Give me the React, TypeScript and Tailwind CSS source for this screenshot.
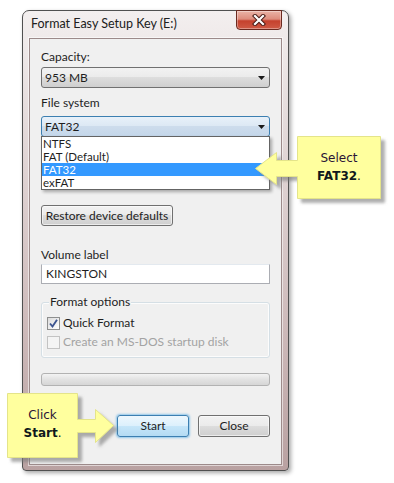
import React from "react";

const Arrow = () => (
  <svg width="7" height="4" viewBox="0 0 7 4" className="block">
    <path d="M0 0 L7 0 L3.5 4 Z" fill="#1a1a1a" />
  </svg>
);

export default function App() {
  return (
    <div className="relative w-[394px] h-[483px] bg-white overflow-hidden font-['Lato',sans-serif] text-[12px] text-[#1e1e1e]">
      {/* Window */}
      <div className="relative ml-[22px] mt-[10px] w-[267px] h-[461px] rounded-t-[7px] rounded-b-[4px] border border-[#505050] bg-[linear-gradient(180deg,#f3efef_0%,#e4dada_25%,#cdb9b9_70%,#b9a1a1_100%)] shadow-[2px_2px_4px_rgba(0,0,0,0.35)] flex flex-col">
        {/* Title bar */}
        <div className="h-[27px] flex items-center pl-[8px] shrink-0">
          <span className="leading-none text-[12.5px] text-[#202020]">Format Easy Setup Key (E:)</span>
        </div>
        <div className="absolute right-[6px] top-[-1px] w-[46px] h-[20px] rounded-b-[4px] border border-[#6b2a20] bg-[linear-gradient(180deg,#eab3a6_0%,#dd8c7c_45%,#c5412d_55%,#cf5a45_100%)] flex items-center justify-center shadow-[inset_0_0_0_1px_rgba(255,255,255,0.35)]">
          <svg width="14" height="12" viewBox="0 0 14 12">
            <path d="M3 2 L11 10 M11 2 L3 10" stroke="#4a1c16" strokeWidth="4.2" strokeLinecap="square" />
            <path d="M3 2 L11 10 M11 2 L3 10" stroke="#ffffff" strokeWidth="2.2" strokeLinecap="square" />
          </svg>
        </div>

        {/* Client area */}
        <div className="mx-[6px] mb-[5px] flex-1 border border-[#9c8a8a] shadow-[0_0_0_1px_rgba(255,255,255,0.55)] bg-[#f0f0f0] px-[11px] flex flex-col">
          <div className="mt-[10px] h-[16px] leading-[16px]">Capacity:</div>
          <div className="mt-[2px] h-[21px] rounded-[3px] border border-[#707070] bg-[linear-gradient(180deg,#f2f2f2_0%,#ebebeb_49%,#dddddd_50%,#cfcfcf_100%)] flex items-center pl-[3px] pr-[4px]">
            <span className="flex-1">953 MB</span>
            <Arrow />
          </div>
          <div className="mt-[7px] h-[16px] leading-[16px]">File system</div>
          <div className="relative mt-[5px] h-[21px]">
            <div className="h-full rounded-[3px] border border-[#3c7fb1] bg-[linear-gradient(180deg,#e8f1f9_0%,#dce8f4_49%,#cddcec_50%,#c4d7ea_100%)] flex items-center pl-[3px] pr-[4px]">
              <span className="flex-1">FAT32</span>
              <Arrow />
            </div>
            <div className="absolute left-0 top-[20px] w-full border border-[#646464] bg-white shadow-[2px_2px_3px_rgba(0,0,0,0.3)] z-10 text-[11.5px]">
              <div className="h-[13px] leading-[13px] pl-[1px] overflow-hidden">NTFS</div>
              <div className="h-[13px] leading-[13px] pl-[1px] overflow-hidden">FAT (Default)</div>
              <div className="h-[13px] leading-[13px] pl-[1px] overflow-hidden bg-[#3399ff] text-white">FAT32</div>
              <div className="h-[13px] leading-[13px] pl-[1px] overflow-hidden">exFAT</div>
            </div>
          </div>
          <div className="mt-[68px] w-[132px] h-[21px] rounded-[3px] border border-[#707070] bg-[linear-gradient(180deg,#f2f2f2_0%,#ebebeb_49%,#dddddd_50%,#cfcfcf_100%)] flex items-center justify-center whitespace-nowrap shadow-[inset_0_0_0_1px_rgba(255,255,255,0.6)]">
            Restore device defaults
          </div>
          <div className="mt-[21px] h-[16px] leading-[16px]">Volume label</div>
          <div className="mt-[1px] h-[20px] border border-[#abadb3] border-t-[#e3e9ef] bg-white flex items-center pl-[4px]">KINGSTON</div>

          <div className="relative mt-[18px] h-[56px] rounded-[3px] border border-[#d5dfe5] shadow-[inset_0_0_0_1px_rgba(255,255,255,0.8)] pl-[5px] pt-[12px] flex flex-col">
            <span className="absolute left-[7px] top-[-9px] px-[1px] bg-[#f0f0f0] leading-[16px]">Format options</span>
            <div className="h-[16px] flex items-center gap-[3px]">
              <div className="w-[13px] h-[13px] border border-[#8e8f8f] bg-[linear-gradient(135deg,#dcdcdc_0%,#ffffff_100%)] flex items-center justify-center">
                <svg width="11" height="11" viewBox="0 0 11 11">
                  <path d="M2 5.5 L4.5 8.5 L9 1.8" fill="none" stroke="#3d5590" strokeWidth="1.9" />
                </svg>
              </div>
              <span>Quick Format</span>
            </div>
            <div className="mt-[3px] h-[16px] flex items-center gap-[3px] text-[#a3a3a3]">
              <div className="w-[13px] h-[13px] border border-[#c3c3c3] bg-[#f4f4f4]" />
              <span>Create an MS-DOS startup disk</span>
            </div>
          </div>

          <div className="mt-[15px] h-[13px] rounded-[3px] border border-[#b2b2b2] bg-[linear-gradient(180deg,#f3f3f3_0%,#e2e2e2_50%,#d6d6d6_100%)]" />

          <div className="mt-[29px] flex justify-end gap-[9px]">
            <div className="w-[72px] h-[22px] rounded-[3px] border border-[#3c7fb1] bg-[linear-gradient(180deg,#eef7fd_0%,#dcf0fc_49%,#c6e6f9_50%,#b4dbf3_100%)] shadow-[0_0_2px_1px_rgba(80,170,230,0.6)] flex items-center justify-center">
              Start
            </div>
            <div className="w-[72px] h-[22px] rounded-[3px] border border-[#707070] bg-[linear-gradient(180deg,#f2f2f2_0%,#ebebeb_49%,#dddddd_50%,#cfcfcf_100%)] shadow-[inset_0_0_0_1px_rgba(255,255,255,0.6)] flex items-center justify-center">
              Close
            </div>
          </div>
        </div>
      </div>

      {/* Callout shapes */}
      <svg className="absolute left-0 top-0 pointer-events-none z-20" width="394" height="483" viewBox="0 0 394 483">
        <defs>
          <filter id="sh" x="-20%" y="-20%" width="150%" height="150%">
            <feDropShadow dx="4" dy="4" stdDeviation="1.6" floodColor="#7a7a7a" floodOpacity="0.6" />
          </filter>
        </defs>
        <path
          d="M297.5 136.5 L380.5 136.5 L380.5 198.5 L297.5 198.5 L297.5 176.5 L276.5 176.5 L276.5 184.5 L255.5 168.5 L276.5 152.5 L276.5 160.5 L297.5 160.5 Z"
          fill="#ffff9e"
          stroke="#e4e48a"
          strokeWidth="1"
          filter="url(#sh)"
        />
        <path
          d="M7.5 393.5 L77.5 393.5 L77.5 419.5 L95.5 419.5 L95.5 409.5 L113.5 425.5 L95.5 442.5 L95.5 432.5 L77.5 432.5 L77.5 457.5 L7.5 457.5 Z"
          fill="#ffff9e"
          stroke="#e4e48a"
          strokeWidth="1"
          filter="url(#sh)"
        />
      </svg>

      {/* Callout texts */}
      <div className="absolute left-[297px] top-[149px] w-[84px] z-30 flex flex-col items-center font-['DejaVu_Sans',sans-serif] text-[12px] leading-[18px] text-[#2a1436]">
        <span>Select</span>
        <span className="text-[#10181c]"><b>FAT32</b>.</span>
      </div>
      <div className="absolute left-[7px] top-[406px] w-[71px] z-30 flex flex-col items-center font-['DejaVu_Sans',sans-serif] text-[12px] leading-[18px] text-[#2a1436]">
        <span>Click</span>
        <span className="text-[#10181c]"><b>Start</b>.</span>
      </div>
    </div>
  );
}
